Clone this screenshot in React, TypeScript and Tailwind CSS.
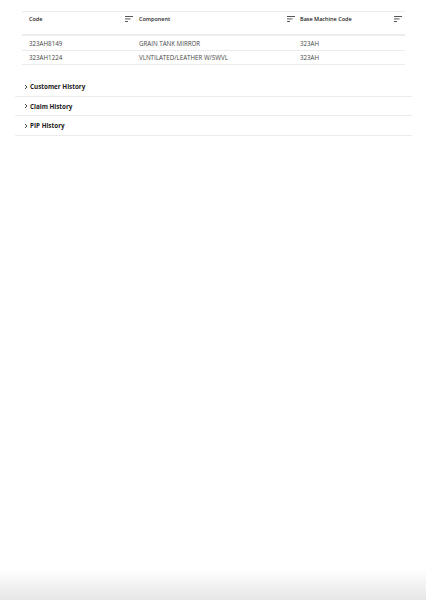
import React from "react";

function SortIcon() {
  return (
    <svg width="8" height="6" viewBox="0 0 8 6" className="shrink-0">
      <rect x="0" y="0" width="8" height="0.9" fill="#444" />
      <rect x="0" y="2.5" width="5.5" height="0.9" fill="#444" />
      <rect x="0" y="5" width="3" height="0.9" fill="#444" />
    </svg>
  );
}

function Chevron() {
  return (
    <svg width="4" height="6" viewBox="0 0 4 6" className="shrink-0">
      <path d="M1 1 L3 3 L1 5" fill="none" stroke="#333" strokeWidth="0.9" />
    </svg>
  );
}

const rows = [
  ["323AH8149", "GRAIN TANK MIRROR", "323AH"],
  ["323AH1224", "VLNTILATED/LEATHER W/SWVL", "323AH"],
];

const cellPad = ["pl-[7px]", "pl-[5px]", "pl-[4px]"];

export default function App() {
  return (
    <div
      className="h-[600px] flex flex-col bg-white"
      style={{ fontFamily: '"Open Sans", "Noto Sans", sans-serif' }}
    >
      <div className="pt-[11px] px-[22px] pr-[21px]">
        <div className="grid grid-cols-[112px_162px_1fr] border-t border-[#ececec]">
          <div className="h-[24px] flex items-start justify-between pt-[3px] pl-[7px] pr-[1px] border-b-2 border-[#ececec]">
            <span className="text-[5.5px] leading-[8px] font-semibold text-[#222]">Code</span>
            <span className="mt-[1px]"><SortIcon /></span>
          </div>
          <div className="h-[24px] flex items-start justify-between pt-[3px] pl-[5px] pr-[1px] border-b-2 border-[#ececec]">
            <span className="text-[5.5px] leading-[8px] font-semibold text-[#222]">Component</span>
            <span className="mt-[1px]"><SortIcon /></span>
          </div>
          <div className="h-[24px] flex items-start justify-between pt-[3px] pl-[4px] pr-[3px] border-b-2 border-[#ececec]">
            <span className="text-[5.5px] leading-[8px] font-semibold text-[#222]">Base Machine Code</span>
            <span className="mt-[1px]"><SortIcon /></span>
          </div>
          {rows.map((r, i) =>
            r.map((c, j) => (
              <div
                key={`${i}-${j}`}
                className={`h-[14.5px] flex items-center border-b border-[#ececec] ${cellPad[j]}`}
              >
                <span className="text-[6.2px] text-[#454545] pt-[1px]">{c}</span>
              </div>
            ))
          )}
        </div>
      </div>
      <div className="mt-[12px] px-[15px] pr-[14px]">
        {["Customer History", "Claim History", "PIP History"].map((t) => (
          <div
            key={t}
            className="h-[19.5px] flex items-center gap-[2px] pl-[9px] pt-[1px] border-b border-[#ececec]"
          >
            <Chevron />
            <span className="text-[6.3px] font-bold text-[#1a1a1a]">{t}</span>
          </div>
        ))}
      </div>
      <div className="flex-1" />
      <div className="h-[30px] bg-gradient-to-b from-white to-[#e6e6e6]" />
    </div>
  );
}
